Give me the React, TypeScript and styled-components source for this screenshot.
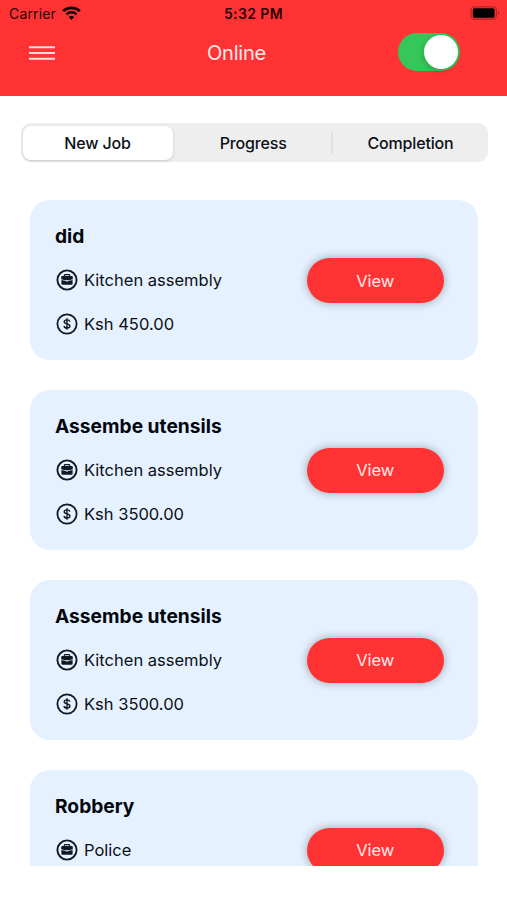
import React, { useState } from "react";
import styled, { createGlobalStyle } from "styled-components";

const RED = "#ff3334";

const GlobalStyle = createGlobalStyle`
  * { box-sizing: border-box; }
  body {
    margin: 0;
    background: #fff;
    color: #0b1016;
    font-family: Inter, "Liberation Sans", sans-serif;
  }
  button { font: inherit; border: 0; padding: 0; background: none; color: inherit; }
`;

const Screen = styled.div`
  display: flex;
  flex-direction: column;
  height: 900px;
  overflow: hidden;
`;

const Header = styled.header`
  flex: none;
  height: 96px;
  background: ${RED};
`;

const StatusBar = styled.div`
  display: grid;
  grid-template-columns: 1fr auto 1fr;
  align-items: center;
  height: 27px;
  padding: 0 7px 0 9px;
  color: #2b0304;
`;

const Carrier = styled.div`
  display: flex;
  align-items: center;
  gap: 6px;
  font-size: 14px;
  letter-spacing: 0.15px;

  svg { margin-top: -1px; }
`;

const Clock = styled.div`
  margin-left: -2px;
  font-size: 14px;
  font-weight: 600;
  letter-spacing: 0.4px;
`;

const BatterySlot = styled.div`
  display: flex;
  justify-content: flex-end;
  padding-bottom: 1px;
`;

const NavBar = styled.div`
  display: grid;
  grid-template-columns: 1fr auto 1fr;
  align-items: center;
  height: 51px;
  padding: 0 47px 0 28px;
`;

const MenuButton = styled.button`
  display: flex;
  width: 28px;
`;

const Title = styled.h1`
  margin: 0 19px 0 0;
  color: #ffeaea;
  font-size: 20px;
  font-weight: 400;
  line-height: 24px;
  letter-spacing: -0.2px;
  padding-left: 4px;
`;

const Toggle = styled.button<{ $on: boolean }>`
  display: flex;
  justify-content: ${(p) => (p.$on ? "flex-end" : "flex-start")};
  justify-self: end;
  width: 62px;
  height: 38px;
  margin-bottom: 1px;
  padding: 2px;
  border-radius: 19px;
  background: ${(p) => (p.$on ? "#35c759" : "#e9e9ea")};
`;

const Knob = styled.span`
  width: 34px;
  height: 34px;
  border-radius: 50%;
  background: #fff;
  box-shadow: -1px 2px 6px rgba(0, 0, 0, 0.18);
`;

const Tabs = styled.div`
  display: grid;
  grid-template-columns: 152px 1fr 156px;
  flex: none;
  height: 39px;
  margin: 27px 19px 0 20.5px;
  padding: 2.5px 0 2.5px 2px;
  border-radius: 10px;
  background: #eeeeef;
`;

const Tab = styled.button<{ $active: boolean; $divided: boolean }>`
  display: flex;
  align-items: center;
  justify-content: center;
  margin-right: ${(p) => (p.$active ? "2px" : "0")};
  border-radius: ${(p) => (p.$active ? "8px" : "0")};
  background: ${(p) => (p.$active ? "#fff" : "transparent")};
  box-shadow: ${(p) => (p.$active ? "0 1px 3px rgba(0, 0, 0, 0.16)" : "none")};
  font-size: 16px;
  font-weight: 500;
  letter-spacing: -0.15px;

  &::before {
    content: "";
    display: ${(p) => (p.$divided ? "block" : "none")};
    width: 2px;
    height: 22px;
    margin-left: -1px;
    margin-right: auto;
    border-radius: 1px;
    background: #e0e0e1;
  }
`;

const TabLabel = styled.span<{ $divided: boolean }>`
  margin-right: ${(p) => (p.$divided ? "auto" : "0")};
`;

const JobList = styled.main`
  display: flex;
  flex-direction: column;
  gap: 29.9px;
  height: 704px;
  flex: none;
  padding: 38px 29px 0 30px;
  overflow: hidden;
`;

const Card = styled.article`
  display: flex;
  align-items: center;
  justify-content: space-between;
  flex: none;
  height: 160px;
  padding: 0 34.5px 0 25px;
  border-radius: 20px;
  background: #e5f1ff;
`;

const Details = styled.div`
  display: flex;
  flex-direction: column;
  gap: 20px;
  height: 112px;
`;

const JobTitle = styled.h2`
  flex: none;
  margin: 0;
  color: #04080d;
  font-size: 19.2px;
  font-weight: 700;
  line-height: 24px;
`;

const Fact = styled.div`
  display: flex;
  align-items: center;
  flex: none;
  gap: 6.5px;
  height: 24px;
  margin-left: 0.5px;
  font-size: 16.5px;
  white-space: nowrap;

  svg { flex: none; }
`;

const ViewButton = styled.button`
  width: 136.5px;
  height: 45px;
  margin-top: 1px;
  border-radius: 23px;
  background: ${RED};
  color: #ffeaea;
  font-size: 16.5px;
  box-shadow: 0 0 10px rgba(0, 0, 0, 0.32);
`;

const WifiIcon = () => (
  <svg width="19" height="15" viewBox="0 0 19 15" fill="none" stroke="#180001">
    <path d="M1.2 5.1C5.7.7 13.3.7 17.8 5.1" strokeWidth="2.7" />
    <path d="M4.4 8.3C7.3 5.5 11.7 5.5 14.6 8.3" strokeWidth="2.4" />
    <path d="M6.7 11.1c1.6-1.5 4-1.5 5.6 0l-2.8 3z" fill="#180001" stroke="none" />
  </svg>
);

const BatteryIcon = () => (
  <svg width="30" height="14" viewBox="0 0 30 14">
    <rect x="1" y=".8" width="25.4" height="12.4" rx="3.6" fill="none" stroke="#b02223" strokeWidth="1.2" />
    <rect x="2.8" y="2.3" width="21.8" height="9.4" rx="1.6" fill="#000" />
    <path d="M27.8 4.7q2.6 2.3 0 4.6z" fill="#a51c1d" />
  </svg>
);

const MenuIcon = () => (
  <svg width="28" height="16" viewBox="0 0 28 16" stroke="#ffdddd" strokeWidth="2">
    <path d="M1 2.2h26M1 8h26M1 13.8h26" />
  </svg>
);

const BriefcaseIcon = () => (
  <svg width="22" height="22" viewBox="0 0 22 22" fill="none" stroke="#111820">
    <circle cx="11" cy="11" r="9.6" strokeWidth="1.9" />
    <path d="M8.3 7V6.4q0-.8.8-.8h3.8q.8 0 .8.8V7" strokeWidth="1.2" />
    <path d="M6.3 6.9h9.4q1.1 0 1.1 1v2.4q-5.8 2-11.6 0V7.9q0-1 1.1-1z" fill="#111820" stroke="none" />
    <path d="M5.4 11q2.4.8 4.5.9v.7h2.2v-.7q2.1-.1 4.5-.9v3.7q0 1-1 1H6.4q-1 0-1-1z" fill="#111820" stroke="none" />
  </svg>
);

const DollarIcon = () => (
  <svg width="22" height="22" viewBox="0 0 22 22" fill="none" stroke="#111820">
    <circle cx="11" cy="11" r="9.6" strokeWidth="1.8" />
    <path d="M13.9 8.7C13.6 7.5 12.4 6.9 11 6.9c-1.6 0-2.8.8-2.8 1.9 0 3 5.7 1.3 5.7 4.2 0 1.2-1.3 2-2.9 2s-2.8-.7-3.1-2M11 5.3v11.4" strokeWidth="1.4" />
  </svg>
);

const TABS = ["New Job", "Progress", "Completion"];

const JOBS = [
  { title: "did", category: "Kitchen assembly", price: "450.00" },
  { title: "Assembe utensils", category: "Kitchen assembly", price: "3500.00" },
  { title: "Assembe utensils", category: "Kitchen assembly", price: "3500.00" },
  { title: "Robbery", category: "Police", price: "" },
];

export default function App() {
  const [online, setOnline] = useState(true);
  const [tab, setTab] = useState(0);

  return (
    <>
      <GlobalStyle />
      <Screen>
        <Header>
          <StatusBar>
            <Carrier>
              Carrier
              <WifiIcon />
            </Carrier>
            <Clock>5:32 PM</Clock>
            <BatterySlot>
              <BatteryIcon />
            </BatterySlot>
          </StatusBar>
          <NavBar>
            <MenuButton>
              <MenuIcon />
            </MenuButton>
            <Title>Online</Title>
            <Toggle $on={online} onClick={() => setOnline(!online)}>
              <Knob />
            </Toggle>
          </NavBar>
        </Header>
        <Tabs>
          {TABS.map((label, i) => (
            <Tab key={label} $active={i === tab} $divided={i === 2} onClick={() => setTab(i)}>
              <TabLabel $divided={i === 2}>{label}</TabLabel>
            </Tab>
          ))}
        </Tabs>
        <JobList>
          {JOBS.map((job, i) => (
            <Card key={i}>
              <Details>
                <JobTitle>{job.title}</JobTitle>
                <Fact>
                  <BriefcaseIcon />
                  {job.category}
                </Fact>
                {job.price && (
                  <Fact>
                    <DollarIcon />
                    Ksh {job.price}
                  </Fact>
                )}
              </Details>
              <ViewButton>View</ViewButton>
            </Card>
          ))}
        </JobList>
      </Screen>
    </>
  );
}
